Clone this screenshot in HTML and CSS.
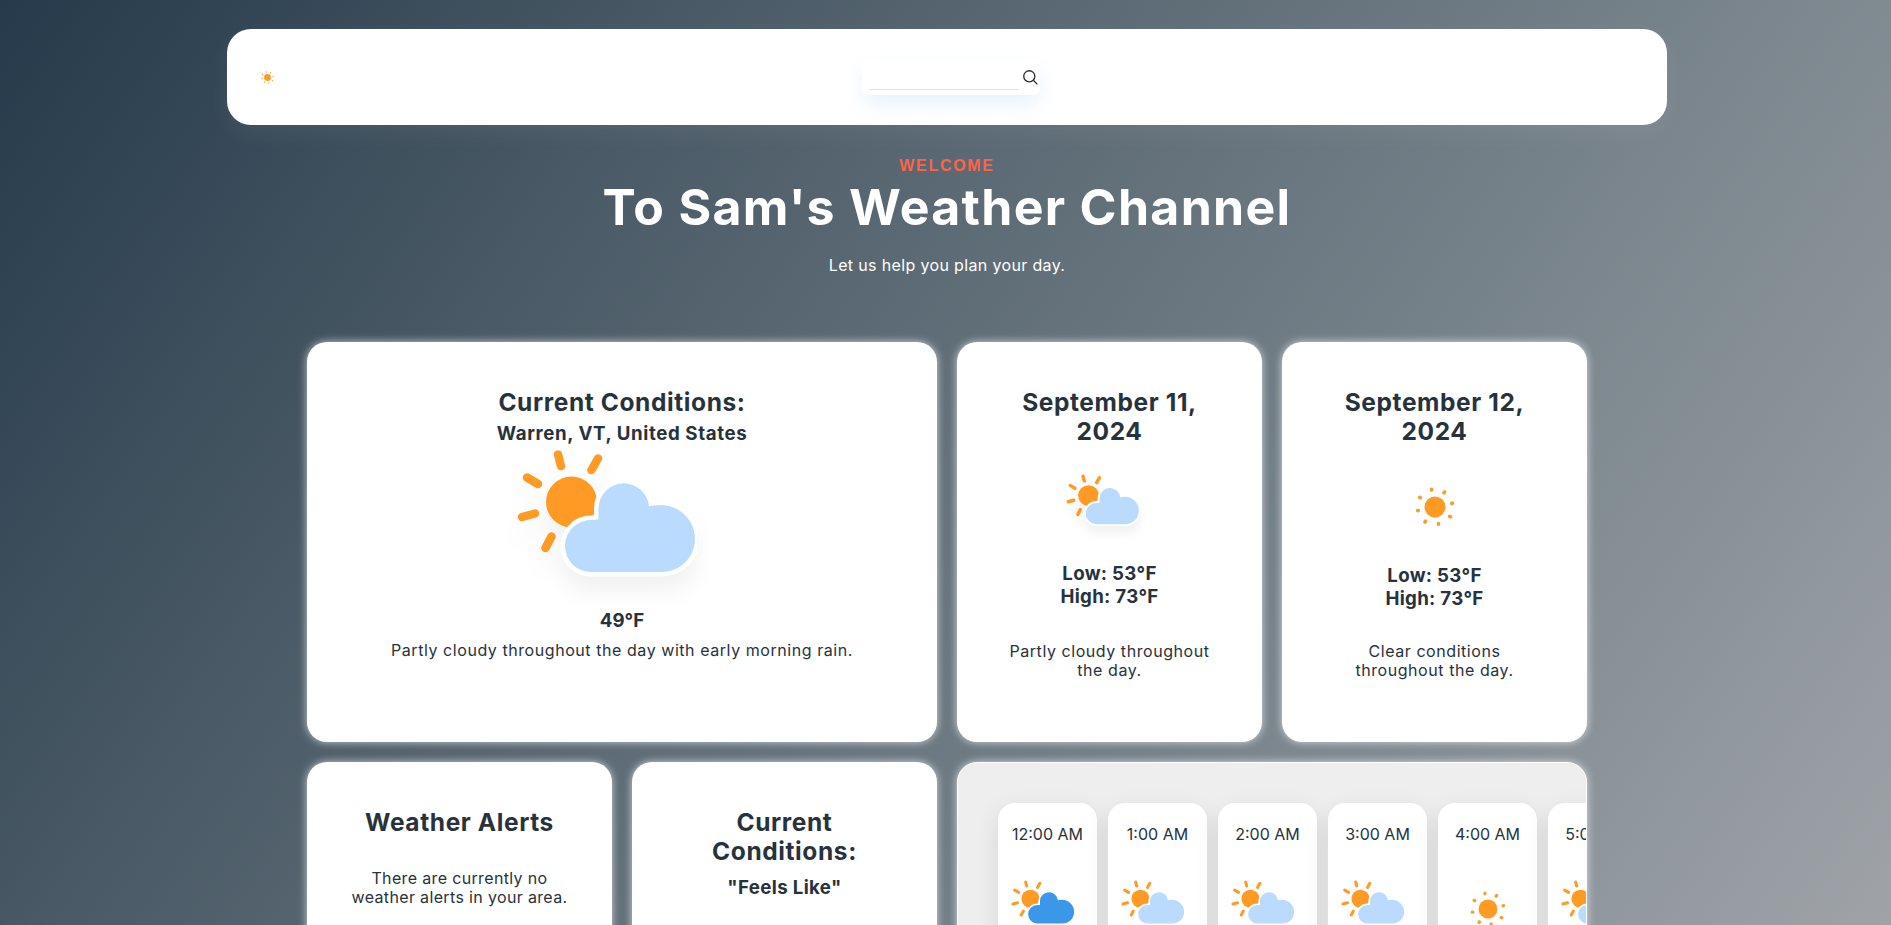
FILE: index.html
```html
<!DOCTYPE html>
<html lang="en">
<head>
<meta charset="utf-8">
<title>Sam's Weather Channel</title>
<link rel="stylesheet" href="styles.css">
</head>
<body>
<svg class="defs" width="0" height="0">
  <symbol id="sun" viewBox="0 0 40 40">
    <circle cx="20" cy="20" r="10.5" fill="#ff9b24"/>
    <g stroke="#f3a033" stroke-width="3.6" stroke-linecap="round">
      <path d="M16.6 2.3v.8M29.6 5l-.6.8M37.4 16.2l-.7.2M35.4 29.8l-.7-.5M23.5 37.3v-.8M10 35l.5-.8M2.5 23.6h.8M4.6 10.3l.7.5"/>
    </g>
  </symbol>
  <symbol id="partly" viewBox="0 0 180 130">
    <circle cx="54.500" cy="53" r="25.500" fill="#ff9b24"/>
    <path d="M41 5.500l3 11.500M81 9.500l-6.500 11.500M10 28.500l11 6.500M5 68l13-3.500M28.500 99l6-11.500" stroke="#ff9b24" stroke-width="8.500" stroke-linecap="round"/>
    <path class="cloud" d="M74 123a26 26 0 0 1 0-52l7.500-.5V59a25.300 25.300 0 0 1 50.500-1.500q4-1.500 12-1.500c18 0 34 15 34 33.500S164 123 144 123z" stroke="#fff" stroke-width="9" paint-order="stroke"/>
  </symbol>
</svg>
<header class="nav">
  <svg class="nav-logo"><use href="#sun"/></svg>
  <form class="search">
    <input class="search-input" type="text" aria-label="Search">
    <svg class="search-icon" viewBox="0 0 16 16"><circle cx="6.700" cy="6.700" r="5.900"/><path d="M11 11l4.300 4.300"/></svg>
  </form>
</header>
<section class="hero">
  <p class="hero-kicker">WELCOME</p>
  <h1 class="hero-title">To Sam's Weather Channel</h1>
  <p class="hero-text">Let us help you plan your day.</p>
</section>
<main class="grid">
  <article class="card card-wide">
    <h2 class="card-title">Current Conditions:</h2>
    <h3 class="card-sub">Warren, VT, United States</h3>
    <svg class="icon-large"><use href="#partly"/></svg>
    <h3 class="card-temp">49°F</h3>
    <p class="card-text">Partly cloudy throughout the day with early morning rain.</p>
  </article>
  <article class="card">
    <h2 class="card-title">September 11,<br>2024</h2>
    <svg class="icon-medium"><use href="#partly"/></svg>
    <h3 class="card-range">Low: 53°F<br>High: 73°F</h3>
    <p class="card-text">Partly cloudy throughout<br>the day.</p>
  </article>
  <article class="card">
    <h2 class="card-title">September 12,<br>2024</h2>
    <svg class="icon-sun"><use href="#sun"/></svg>
    <h3 class="card-range">Low: 53°F<br>High: 73°F</h3>
    <p class="card-text">Clear conditions<br>throughout the day.</p>
  </article>
  <article class="card">
    <h2 class="card-title">Weather Alerts</h2>
    <p class="card-text card-alert">There are currently no<br>weather alerts in your area.</p>
  </article>
  <article class="card">
    <h2 class="card-title">Current<br>Conditions:</h2>
    <h3 class="card-sub card-feels">"Feels Like"</h3>
  </article>
  <article class="card card-wide hourly">
    <div class="hour rainy"><p class="hour-time">12:00 AM</p><svg class="hour-icon"><use href="#partly"/></svg></div>
    <div class="hour"><p class="hour-time">1:00 AM</p><svg class="hour-icon"><use href="#partly"/></svg></div>
    <div class="hour"><p class="hour-time">2:00 AM</p><svg class="hour-icon"><use href="#partly"/></svg></div>
    <div class="hour"><p class="hour-time">3:00 AM</p><svg class="hour-icon"><use href="#partly"/></svg></div>
    <div class="hour"><p class="hour-time">4:00 AM</p><svg class="hour-sun"><use href="#sun"/></svg></div>
    <div class="hour"><p class="hour-time">5:00 AM</p><svg class="hour-icon"><use href="#partly"/></svg></div>
  </article>
</main>
</body>
</html>
```
FILE: styles.css
```css
* { box-sizing: border-box; margin: 0; padding: 0; }
html { height: 100%; overflow: hidden; }
body {
  height: 925px;
  overflow: hidden;
  padding: 29px 0 0 3px;
  font-family: Inter, "Open Sans", sans-serif;
  font-size: 16px;
  line-height: 19px;
  color: #27323c;
  background: linear-gradient(125deg, #263a4b 0%, #4a5a66 28%, #76828a 66%, #9fa3a8 100%);
}
.defs { position: absolute; }
.cloud { fill: var(--cloud, #badafe); }
.nav {
  display: grid;
  grid-template-columns: 1fr auto 1fr;
  align-items: center;
  width: 1440px;
  height: 96px;
  margin: 0 auto;
  padding: 0 34px;
  border-radius: 24px;
  background: #fff;
  box-shadow: 0 8px 24px rgba(255, 255, 255, .06);
}
.nav-logo { width: 13px; height: 13px; }
.search {
  display: flex;
  align-items: center;
  gap: 4px;
  width: 178px;
  height: 36px;
  margin: 0 0 0 8px;
  padding-left: 7px;
  border-radius: 6px;
  background: #fff;
  box-shadow: 0 10px 20px -2px rgba(150, 195, 235, .24);
}
.search-input {
  width: 150px;
  height: 26px;
  border: 0;
  border-bottom: 1px solid #dfe3e5;
  background: transparent;
}
.search-icon { width: 15px; height: 15px; fill: none; stroke: #2c2c2c; stroke-width: 1.400; overflow: visible; }
.hero { display: flex; flex-direction: column; align-items: center; padding-top: 31px; color: #fff; }
.hero-kicker { font: 700 16px/19px "Liberation Sans", Arial, sans-serif; letter-spacing: 1.700px; color: #ff6347; }
.hero-title { margin-top: 2px; font-size: 50px; line-height: 60px; letter-spacing: 1.300px; }
.hero-text { margin-top: 19px; line-height: 19px; letter-spacing: .350px; }
.grid {
  display: grid;
  grid-template-columns: repeat(4, 305px);
  grid-auto-rows: 400px;
  gap: 20px;
  width: 1280px;
  margin: 67px auto 0;
}
.card {
  display: flex;
  flex-direction: column;
  align-items: center;
  padding-top: 46px;
  border-radius: 20px;
  background: #fff;
  text-align: center;
  box-shadow: 0 0 8px rgba(255, 255, 255, .7);
}
.card-wide { grid-column: span 2; }
.card-title { font-size: 24.500px; line-height: 29px; letter-spacing: .600px; }
.card-sub { margin-top: 5px; font-size: 18.700px; line-height: 23px; letter-spacing: .600px; }
.card-feels { margin-top: 10px; letter-spacing: .350px; }
.card-temp { margin-top: 30px; font-size: 18.700px; line-height: 23px; }
.card-temp + .card-text { margin-top: 9px; }
.card-text { letter-spacing: .560px; }
.card-range { font-size: 18.700px; line-height: 23px; letter-spacing: .300px; }
.card-range + .card-text { margin-top: 34px; }
.icon-sun ~ .card-text { margin-top: 32px; }
.card-alert { margin-top: 32px; letter-spacing: .350px; }
.icon-large { width: 180px; height: 130px; margin: 4px 31px 0 0; filter: drop-shadow(0 16px 10px rgba(0, 0, 0, .05)); overflow: visible; }
.icon-medium { width: 74px; height: 53px; margin: 28px 14px 35px 0; filter: drop-shadow(0 8px 4px rgba(0, 0, 0, .05)); overflow: visible; }
.icon-sun { width: 40px; height: 40px; margin: 41px 0 37px; }
.hourly {
  flex-direction: row;
  align-items: stretch;
  gap: 11px;
  padding: 40px 0 40px 40px;
  overflow: hidden;
  background: #eee;
  border: 1px solid #fff;
}
.hour {
  flex: 0 0 99px;
  display: flex;
  flex-direction: column;
  align-items: center;
  padding-top: 22px;
  border-radius: 17px;
  background: #fff;
  box-shadow: 0 8px 24px rgba(0, 0, 0, .1);
}
.rainy { --cloud: #3b97ea; }
.hour-icon { width: 64px; height: 46px; margin: 36px 10px 0 0; overflow: visible; }
.hour-sun { width: 36px; height: 36px; margin: 47px 0 0; }
```
